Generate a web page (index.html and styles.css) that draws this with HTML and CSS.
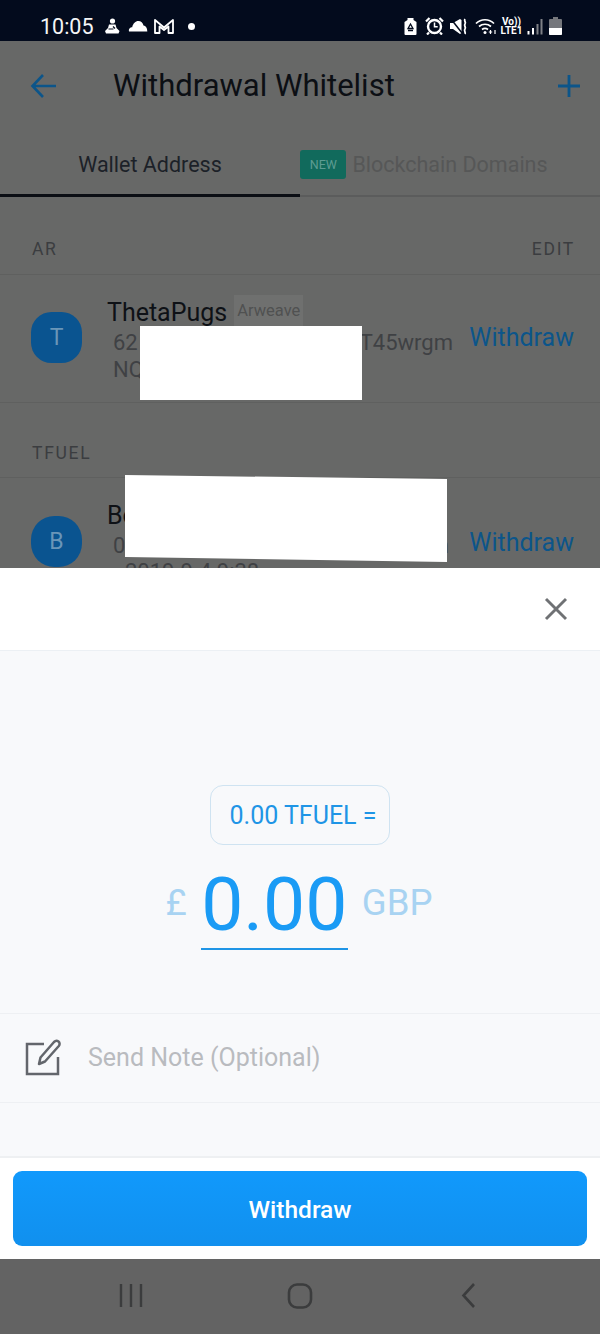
FILE: index.html
```html
<!DOCTYPE html>
<html lang="en">
<head>
  <meta charset="UTF-8">
  <meta name="viewport" content="width=device-width, initial-scale=1.0">
  <title>Withdrawal Whitelist</title>
  <link rel="stylesheet" href="styles.css">
</head>
<body>
  <div class="phone">
    <!-- status bar -->
    <div class="status">
      <div class="status-left">
        <span class="clock">10:05</span>
        <svg class="ico" width="18" height="17" viewBox="0 0 18 17"><circle cx="8.500" cy="3" r="2.600" fill="#fff"/><path d="M5 6.500h6.500l1 3.500 3 3-1 2.500H2L1 13l3-3z" fill="#fff"/><path d="M4.500 11h5M9 8.500l2 2" stroke="#030b1d" stroke-width="1.200"/></svg>
        <svg class="ico" width="20" height="12" viewBox="0 0 20 12"><path d="M1 11.500c-.6-2.600 1-4.300 3.200-4.300C5 3.400 7.600 1 10.300 1c2.700 0 4.700 2 5.200 4.600 2.300.2 3.800 2.300 3.800 5.900z" fill="#fff"/></svg>
        <svg class="ico" width="20" height="16" viewBox="0 0 20 16"><path d="M1 15V2l9 7.500L19 2v13h-4.500V8.500L10 12 5.500 8.500V15z" fill="none" stroke="#fff" stroke-width="1.800" stroke-linejoin="round"/></svg>
        <span class="dot"></span>
      </div>
      <div class="status-right">
        <svg class="ico" width="15" height="17" viewBox="0 0 15 17"><path d="M3.500 0h6v2l3 2v12a1 1 0 0 1-1 1h-10a1 1 0 0 1-1-1V4l3-2z" fill="#fff"/><path d="M6.500 6 4 10.500h5zM4 12.500h5" fill="none" stroke="#030b1d" stroke-width="1.300"/></svg>
        <svg class="ico" width="19" height="18" viewBox="0 0 19 18"><circle cx="9.500" cy="9.500" r="6.500" fill="#030b1d" stroke="#fff" stroke-width="2.400"/><path d="M9.500 5.500v4.200h3.200" fill="none" stroke="#fff" stroke-width="1.500"/><path d="M1 4.500 4.500 1M18 4.500 14.500 1M4 15.500l-2 2M15 15.500l2 2" stroke="#fff" stroke-width="2.200"/></svg>
        <svg class="ico" width="19" height="17" viewBox="0 0 19 17"><path d="M0 5h3l7-4 1.500 1v13L10 16 3 11H0z" fill="#fff"/><path d="M1 1l11 14" stroke="#030b1d" stroke-width="1.500"/><path d="M15 1c-1.500 2 1.500 3 0 5s1.500 3 0 5 1 3 0 5" fill="none" stroke="#fff" stroke-width="1.800"/></svg>
        <svg class="ico" width="22" height="17" viewBox="0 0 22 17"><path d="M1 5.500c5-5 13-5 18 0M4 8.500c3.500-3 8.500-3 12 0M7 11.500c2-1.500 4-1.500 6 0" fill="none" stroke="#fff" stroke-width="1.700"/><circle cx="10" cy="14.500" r="1.500" fill="#fff"/><path d="M15.500 12v4M20 12v4M13.800 14h3.400" stroke="#fff" stroke-width="1.200"/></svg>
        <div class="volte"><span>Vo))</span><span>LTE1</span></div>
        <svg class="ico" width="16" height="17" viewBox="0 0 16 17"><path d="M1.500 13v3.500" stroke="#fff" stroke-width="2"/><path d="M6 10v6.500" stroke="#fff" stroke-width="2"/><path d="M10.500 6v10.500M14.500 1v15.500" stroke="#7e8086" stroke-width="2"/></svg>
        <svg class="ico" width="13" height="18" viewBox="0 0 13 18"><path d="M4 0h5v2h3a1 1 0 0 1 1 1v14a1 1 0 0 1-1 1H1a1 1 0 0 1-1-1V3a1 1 0 0 1 1-1h3z" fill="#75777c"/><path d="M0 11h13v6a1 1 0 0 1-1 1H1a1 1 0 0 1-1-1z" fill="#fff"/></svg>
      </div>
    </div>

    <!-- dimmed list behind the sheet -->
    <div class="page">
      <div class="topbar">
        <svg class="back" width="28" height="28" viewBox="0 0 28 28"><path d="M26 14H3M13 3 2.500 14 13 25" fill="none" stroke="#0c558a" stroke-width="2.600"/></svg>
        <h1 class="title">Withdrawal Whitelist</h1>
        <svg class="plus" width="24" height="24" viewBox="0 0 24 24"><path d="M12 1v22M1 12h22" fill="none" stroke="#0c558a" stroke-width="2.800"/></svg>
      </div>
      <div class="tabs">
        <div class="tab tab-on">Wallet Address</div>
        <div class="tab tab-off"><span class="new">NEW</span><span>Blockchain Domains</span></div>
      </div>

      <div class="section"><span>AR</span><span>EDIT</span></div>
      <div class="row">
        <div class="avatar">T</div>
        <div class="info">
          <div class="name">ThetaPugs <span class="tag">Arweave</span></div>
          <div class="addr">
            <span>62</span><span>T45wrgm</span>
          </div>
          <div class="addr-2">NQ</div>
        </div>
        <div class="link">Withdraw</div>
      </div>

      <div class="section section-plain"><span>TFUEL</span></div>
      <div class="row row-b">
        <div class="avatar avatar-b">B</div>
        <div class="info">
          <div class="name">Bo</div>
          <div class="addr addr-b"><span>0</span><span>n</span></div>
          <div class="addr-3">2019-9-4 9:38</div>
        </div>
        <div class="link">Withdraw</div>
      </div>

      <div class="mask mask-a"></div>
      <svg class="mask mask-b" width="322" height="87" viewBox="0 0 322 87"><path d="M0 0 322 4V87L0 82z" fill="#fff"/></svg>
    </div>

    <!-- withdraw sheet -->
    <div class="sheet">
      <div class="sheet-head">
        <svg width="24" height="24" viewBox="0 0 24 24"><path d="M2 2l20 20M22 2 2 22" fill="none" stroke="#6f7174" stroke-width="2.900"/></svg>
      </div>
      <div class="sheet-body">
        <div class="amount">
          <div class="chip">0.00 TFUEL =</div>
          <div class="figure">
            <span class="unit">£</span>
            <span class="value">0.00</span>
            <span class="unit">GBP</span>
          </div>
        </div>
        <div class="note">
          <svg width="40" height="40" viewBox="0 0 40 40"><path d="M20 6H3v30h31V19" fill="none" stroke="#63666c" stroke-width="2.500"/><path d="M15 26l1.500-6.500L30 4c1.500-1.500 3.200-1.500 4.500-.5s1.500 3 .3 4.500L21 23.500z" fill="none" stroke="#63666c" stroke-width="2.500" stroke-linejoin="round"/></svg>
          <span>Send Note (Optional)</span>
        </div>
      </div>
      <div class="sheet-foot">
        <div class="btn">Withdraw</div>
      </div>
    </div>

    <!-- android nav -->
    <div class="navbar">
      <svg width="26" height="26" viewBox="0 0 26 26"><path d="M3 1v23M13 1v23M23 1v23" stroke="#3b3c3d" stroke-width="2.400"/></svg>
      <svg width="26" height="26" viewBox="0 0 26 26"><rect x="2" y="1.500" width="22" height="23" rx="8" fill="none" stroke="#3b3c3d" stroke-width="2.600"/></svg>
      <svg width="26" height="26" viewBox="0 0 26 26"><path d="M18 1 7.500 12.500 18 24" fill="none" stroke="#3b3c3d" stroke-width="2.600"/></svg>
    </div>
  </div>
</body>
</html>
```

FILE: styles.css
```css
*{
  box-sizing: border-box;
}
html,body{
  margin: 0;
  padding: 0;
}
body{
  font-family: Roboto, "Liberation Sans", sans-serif;
  background-color: #fff;
}
.phone{
  width: 600px;
  height: 1334px;
  display: flex;
  flex-direction: column;
  overflow: hidden;
}
.ico{
  display: block;
  flex: none;
}

/* status bar */
.status{
  height: 41px;
  flex: none;
  background-color: #030b1d;
  display: flex;
  justify-content: space-between;
  align-items: center;
  padding: 11px 38px 0 40px;
}
.status-left{
  display: flex;
  align-items: center;
  gap: 6px;
}
.clock{
  color: #f4f5f6;
  font-size: 21.500px;
  margin-right: 4px;
}
.dot{
  width: 7px;
  height: 7px;
  margin-left: 8px;
  border-radius: 50%;
  background-color: #fff;
}
.status-right{
  display: flex;
  align-items: center;
  gap: 6px;
}
.volte{
  width: 21px;
  display: flex;
  flex-direction: column;
  align-items: center;
  color: #fff;
  font-size: 10px;
  font-weight: 700;
  line-height: 9px;
  margin: 0 -1px 0 -2px;
}

/* dimmed page */
.page{
  position: relative;
  height: 527px;
  flex: none;
  overflow: hidden;
  background-color: #676867;
}
.topbar{
  height: 89px;
  display: flex;
  align-items: center;
  padding: 0 19px 0 30px;
}
.back{
  margin-right: 55px;
}
.title{
  flex: 1;
  margin: 0 0 1px;
  color: #0c0f14;
  font-size: 31px;
  font-weight: 400;
}
.tabs{
  height: 67px;
  display: flex;
  border-bottom: 2px solid #5b5c5c;
}
.tab{
  width: 300px;
  height: 67px;
  display: flex;
  justify-content: center;
  align-items: center;
  gap: 6px;
  font-size: 21.500px;
}
.tab-on{
  padding-top: 4px;
  color: #1c2128;
  border-bottom: 3px solid #0b0e14;
}
.tab-off{
  padding: 1px 52px 0 0;
  color: #565757;
}
.new{
  width: 46px;
  height: 29px;
  display: flex;
  justify-content: center;
  align-items: center;
  border-radius: 3px;
  background-color: #116a5c;
  color: #5d9c92;
  font-size: 12.500px;
}
.section{
  height: 78px;
  display: flex;
  justify-content: space-between;
  align-items: flex-end;
  padding: 0 25px 15px 32px;
  border-bottom: 1px solid #5f605f;
  color: #3b3d40;
  font-size: 17.500px;
  letter-spacing: 1.700px;
}
.section-plain{
  height: 76px;
  border-top: 1px solid #5f605f;
  padding-bottom: 14px;
}
.row{
  height: 127px;
  display: flex;
  align-items: center;
  padding: 3px 26px 0 31px;
}
.row-b{
  align-items: flex-start;
  padding-top: 22px;
}
.avatar{
  width: 51px;
  height: 51px;
  flex: none;
  display: flex;
  justify-content: center;
  align-items: center;
  margin-top: -5px;
  border-radius: 40%;
  background-color: #0a5490;
  color: #6a96b8;
  font-size: 23px;
}
.avatar-b{
  margin-top: 16px;
  border-radius: 46%;
}
.info{
  flex: 1;
  min-width: 0;
  margin-left: 25px;
}
.name{
  display: flex;
  align-items: center;
  gap: 7px;
  height: 30px;
  color: #0e1116;
  font-size: 25px;
}
.tag{
  height: 31px;
  margin-top: -3px;
  padding: 0 3px;
  display: flex;
  align-items: center;
  background-color: #6f706f;
  color: #505151;
  font-size: 16.500px;
}
.addr{
  display: flex;
  justify-content: space-between;
  width: 340px;
  margin: 2px 0 0 6px;
  color: #3f4144;
  font-size: 22px;
  line-height: 27px;
}
.addr-b{
  width: 336px;
}
.addr-2{
  margin: 0 0 0 6px;
  color: #3f4144;
  font-size: 22px;
  line-height: 27px;
}
.addr-3{
  margin: -1px 0 0 18px;
  color: #3f4144;
  font-size: 22px;
  line-height: 27px;
}
.link{
  flex: none;
  margin-top: -5px;
  margin-left: 16px;
  color: #0c558a;
  font-size: 25px;
}
.row-b .link{
  margin-top: 28px;
}
.mask{
  position: absolute;
}
.mask-a{
  left: 140px;
  top: 285px;
  width: 222px;
  height: 74px;
  background-color: #fff;
}
.mask-b{
  left: 125px;
  top: 434px;
  display: block;
}

/* sheet */
.sheet{
  height: 691px;
  flex: none;
  display: flex;
  flex-direction: column;
  background-color: #fff;
}
.sheet-head{
  height: 83px;
  flex: none;
  display: flex;
  justify-content: flex-end;
  align-items: center;
  padding: 0 32px 0 0;
  border-bottom: 1px solid #ecf0f4;
}
.sheet-body{
  height: 507px;
  flex: none;
  background-color: #f8f9fb;
  border-bottom: 2px solid #eef0f2;
}
.amount{
  height: 363px;
  display: flex;
  flex-direction: column;
  align-items: center;
  padding-top: 134px;
  border-bottom: 1px solid #eef0f3;
}
.chip{
  width: 180px;
  height: 60px;
  display: flex;
  justify-content: center;
  align-items: center;
  padding: 1px 0 0 6px;
  border: 1px solid #cfe3f1;
  border-radius: 13px;
  color: #1f95e6;
  font-size: 25px;
}
.figure{
  display: flex;
  align-items: center;
  gap: 14px;
  margin-top: 20px;
  margin-left: -2px;
}
.value{
  width: 147px;
  height: 85px;
  border-bottom: 2px solid #1f95e6;
  color: #1a9bf5;
  font-size: 75px;
  line-height: 78px;
  text-align: center;
}
.unit{
  margin-top: -10px;
  color: #a8d3f2;
  font-size: 36.500px;
}
.note{
  height: 89px;
  display: flex;
  align-items: center;
  gap: 24px;
  padding: 0 0 1px 24px;
  border-bottom: 1px solid #eef0f3;
  color: #b9bbbf;
  font-size: 25px;
}
.sheet-foot{
  flex: 1;
  padding: 13px;
}
.btn{
  height: 75px;
  display: flex;
  justify-content: center;
  align-items: center;
  padding-top: 1px;
  border-radius: 9px;
  background: linear-gradient(#1199fc, #1190ee);
  color: #fff;
  font-size: 24.500px;
  font-weight: 500;
}

/* android nav */
.navbar{
  height: 75px;
  flex: none;
  display: flex;
  justify-content: center;
  gap: 143px;
  padding: 24px 0 0;
  background-color: #636363;
}
```
